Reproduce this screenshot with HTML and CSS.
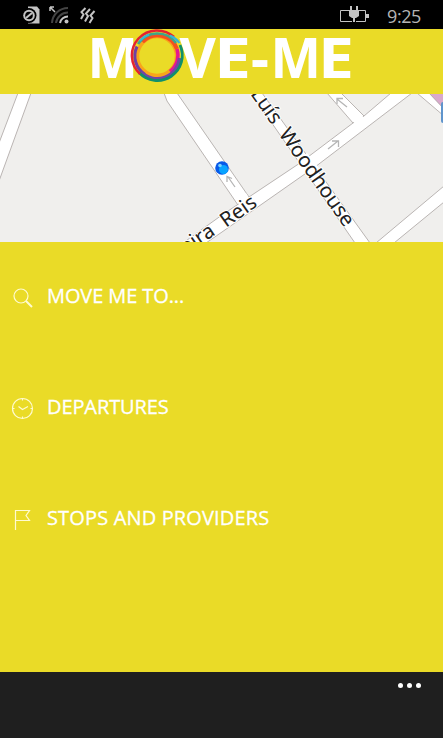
FILE: index.html
```html
<!DOCTYPE html>
<html lang="en">
<head>
    <meta charset="UTF-8">
    <meta name="viewport" content="width=device-width, initial-scale=1.0">
    <title>MOVE-ME</title>
    <link rel="stylesheet" href="styles.css">
</head>
<body>

<div class="phone">
    <div class="status-bar">
        <svg class="status-icons" viewBox="0 0 100 29">
            <path d="M28 6.500h9l2.500 3V23.500H28z" fill="#c4c4c4"/>
            <circle cx="29" cy="15.500" r="7.500" fill="#000"/>
            <circle cx="29" cy="15.500" r="5.800" fill="#c4c4c4"/>
            <circle cx="29" cy="15.500" r="3.800" fill="#000"/>
            <path d="M26 18l6-5" stroke="#c4c4c4" stroke-width="2"/>
            <path d="M50 7h4M50 7v4M50 7l5 5" fill="none" stroke="#c4c4c4" stroke-width="1.500"/>
            <path d="M52 23A16 16 0 0 1 68 8M56 23A12 12 0 0 1 68 12.500" fill="none" stroke="#444" stroke-width="2"/>
            <path d="M60 23A8 8 0 0 1 68 16.500" fill="none" stroke="#c4c4c4" stroke-width="2"/>
            <circle cx="66.500" cy="21.500" r="2" fill="#c4c4c4"/>
            <path d="M85.500 8l-4 4 2 2.500-2.500 4.500M90 9l-4 4.500 2 2.500-3 5.500M94.500 11l-4 4.500 2 2.500-3 5" fill="none" stroke="#c4c4c4" stroke-width="2"/>
        </svg>
        <div class="status-right">
            <svg class="battery" viewBox="0 0 31 20">
                <path d="M10 5.500H1.500v11H13M20 5.500h6.500v11H17" fill="none" stroke="#c4c4c4"/>
                <path d="M27 9h3v4h-3zM11 1h2v4h4V1h2v4h1v6l-3 2h-1v4h-2v-4h-1l-3-2V5h1z" fill="#c4c4c4"/>
            </svg>
            <span class="time">9:25</span>
        </div>
    </div>

    <header class="header">
        <svg class="logo" viewBox="0 29 443 65">
            <g class="logo-text">
                <text x="87.500" y="77.500" textLength="50.500" lengthAdjust="spacingAndGlyphs">M</text>
                <text x="179.500" y="77.500">V</text>
                <text x="214" y="77.500" textLength="37" lengthAdjust="spacingAndGlyphs">E</text>
                <text x="251" y="77.500">-</text>
                <text x="270.500" y="77.500" textLength="50.500" lengthAdjust="spacingAndGlyphs">M</text>
                <text x="318" y="77.500" textLength="36" lengthAdjust="spacingAndGlyphs">E</text>
            </g>
            <circle cx="157" cy="56" r="25" fill="#eadb27"/>
            <g fill="none">
                <circle cx="157" cy="56" r="19.500" stroke="#f9a51a" stroke-width="3.500"/>
                <path d="M142.500 42A20.500 20.500 0 0 1 177 49" stroke="#f4511e" stroke-width="4"/>
                <path d="M177 49A20.500 20.500 0 0 1 170 71.500" stroke="#e5178f" stroke-width="3.500"/>
                <path d="M137 46.500A22 22 0 0 0 145 74.500" stroke="#6f3fa3" stroke-width="3"/>
                <path d="M141 72A22.500 22.500 0 0 0 179.500 58" stroke="#7345a5" stroke-width="3.500"/>
                <path d="M138 44A23 23 0 0 1 176 43" stroke="#3fa58a" stroke-width="2.500"/>
                <path d="M139 72.500A25 25 0 0 0 180 45" stroke="#10906c" stroke-width="2.800"/>
                <path d="M140 74A25 25 0 0 1 174 37" stroke="#e42330" stroke-width="2.500"/>
                <path d="M139.500 41A23 23 0 0 1 149 34.500M170 35.500Q176 38 179.500 43" stroke="#35b5d8" stroke-width="2"/>
            </g>
        </svg>
    </header>

    <svg class="map" viewBox="0 94 443 148">
        <path class="land-pink" d="M429 94h14v14q-10-2-14-14z"/>
        <g class="road">
            <path d="M18 93L-1 143V181L31 93z"/>
            <path d="M164 93l3 8 73 107 9-11-72-104z"/>
            <path d="M327 93l26 30 11-7-23-23z"/>
            <path d="M417 93l27 23v-7l-15-16z"/>
            <path d="M251 93l104 150h15L262 93z"/>
            <path d="M376 243l68-57v16l-50 41z"/>
            <path d="M183 243l39-28 27-18 51-34 53-40 11-7 27-23h21l-97 74-13 9-80 56-16 11z"/>
        </g>
        <!-- open the junctions where the side streets meet -->
        <g class="road-fill">
            <path d="M236 201l10-8 4 7-9 6z"/>
            <path d="M351 119l9-6 5 6-9 6z"/>
            <path d="M297 160l10-7 12 15-10 8z"/>
        </g>
        <g class="arrow">
            <path d="M347 107l-10-8M337 104v-5.500h6"/>
            <path d="M328 149l10-8M332 141h6.500v6"/>
            <path d="M235 187l-7-10M227 182v-5.500l5 2"/>
        </g>
        <text class="street" transform="translate(250 94) rotate(54.800)" textLength="164">Luís&#160; Woodhouse</text>
        <text class="street" transform="translate(186 254.500) rotate(-34)">eira</text>
        <text class="street" transform="translate(226 228) rotate(-35)">Reis</text>
        <rect x="441" y="102" width="4" height="21" rx="2" fill="#5f94cc"/>
        <circle cx="222" cy="168" r="6.800" fill="#0759e8"/>
        <circle cx="223.500" cy="169.500" r="4.500" fill="#08a4ff"/>
        <circle cx="220" cy="165.500" r="1.800" fill="#7bd3ff"/>
    </svg>

    <nav class="menu">
        <a class="menu-item">
            <svg class="menu-icon" viewBox="0 0 24 24">
                <circle cx="10" cy="10" r="7"/>
                <path class="thick" d="M15 15l6 6"/>
            </svg>
            <span>MOVE ME TO...</span>
        </a>
        <a class="menu-item">
            <svg class="menu-icon" viewBox="0 0 24 24">
                <circle cx="11.500" cy="11.500" r="10"/>
                <path d="M7.500 9.500l4 3 5.500-3M11.500 1.500v2M11.500 19.500v2M1.500 11.500h2M19.500 11.500h2"/>
            </svg>
            <span>DEPARTURES</span>
        </a>
        <a class="menu-item wide">
            <svg class="menu-icon" viewBox="0 0 24 24">
                <path d="M4.500 22V2.500h14l-3.500 5 3.500 5h-14"/>
            </svg>
            <span>STOPS AND PROVIDERS</span>
        </a>
    </nav>

    <footer class="app-bar">
        <span class="dot"></span>
        <span class="dot"></span>
        <span class="dot"></span>
    </footer>
</div>

</body>
</html>
```

FILE: styles.css
```css
body {
    margin: 0;
    font-family: "Open Sans", "Noto Sans", sans-serif;
    background-color: #000;
}

.phone {
    display: flex;
    flex-direction: column;
    width: 443px;
    height: 738px;
    overflow: hidden;
    background-color: #eadb27;
}

.status-bar {
    display: flex;
    justify-content: space-between;
    height: 29px;
    background-color: #000;
}

.status-icons {
    width: 100px;
    height: 29px;
}

.status-right {
    display: flex;
    align-items: center;
    gap: 17px;
    padding-right: 21px;
}

.battery {
    width: 31px;
    height: 20px;
}

.time {
    width: 35px;
    font-size: 18px;
    line-height: 29px;
    letter-spacing: -0.4px;
    white-space: nowrap;
    color: #b5b5b5;
    padding-top: 3px;
}

.header {
    height: 65px;
}

.logo,
.map {
    display: block;
    width: 100%;
}

.logo {
    height: 65px;
}

.logo-text {
    font-family: "Noto Sans", sans-serif;
    font-size: 56px;
    font-weight: bold;
    fill: #fff;
}

.map {
    height: 148px;
    background-color: #f0efed;
}

.road {
    fill: #fff;
    stroke: #aaa3a1;
    stroke-width: 0.8;
}

.road-fill {
    fill: #fff;
}

.land-pink {
    fill: #d9a9cc;
}

.arrow {
    fill: none;
    stroke: #b5b5b5;
    stroke-width: 1.3;
}

.street {
    font-family: "Noto Sans", sans-serif;
    font-size: 20.5px;
    fill: #222;
    stroke: #fff;
    stroke-width: 2px;
    paint-order: stroke;
}

/* Menu */
.menu {
    flex: 1;
    display: flex;
    flex-direction: column;
    gap: 81px;
    padding: 39px 11px 0;
}

.menu-item {
    display: flex;
    align-items: center;
    gap: 12px;
    height: 30px;
    font-size: 20px;
    letter-spacing: -0.1px;
    color: #fff;
    -webkit-text-stroke: 0.3px #fff;
}

.menu-item.wide {
    letter-spacing: 0.15px;
}

.menu-item span {
    margin-top: -2px;
}

.menu-icon {
    width: 24px;
    height: 24px;
    margin-top: 3px;
    fill: none;
    stroke: #fffbd0;
    stroke-width: 1.2;
}

.menu-icon .thick {
    stroke-width: 2;
}

/* Bottom bar */
.app-bar {
    display: flex;
    justify-content: flex-end;
    gap: 4px;
    height: 55px;
    padding: 11px 22px 0;
    background-color: #1f1f1f;
}

.dot {
    width: 5px;
    height: 5px;
    border-radius: 50%;
    background-color: #fff;
}
```
